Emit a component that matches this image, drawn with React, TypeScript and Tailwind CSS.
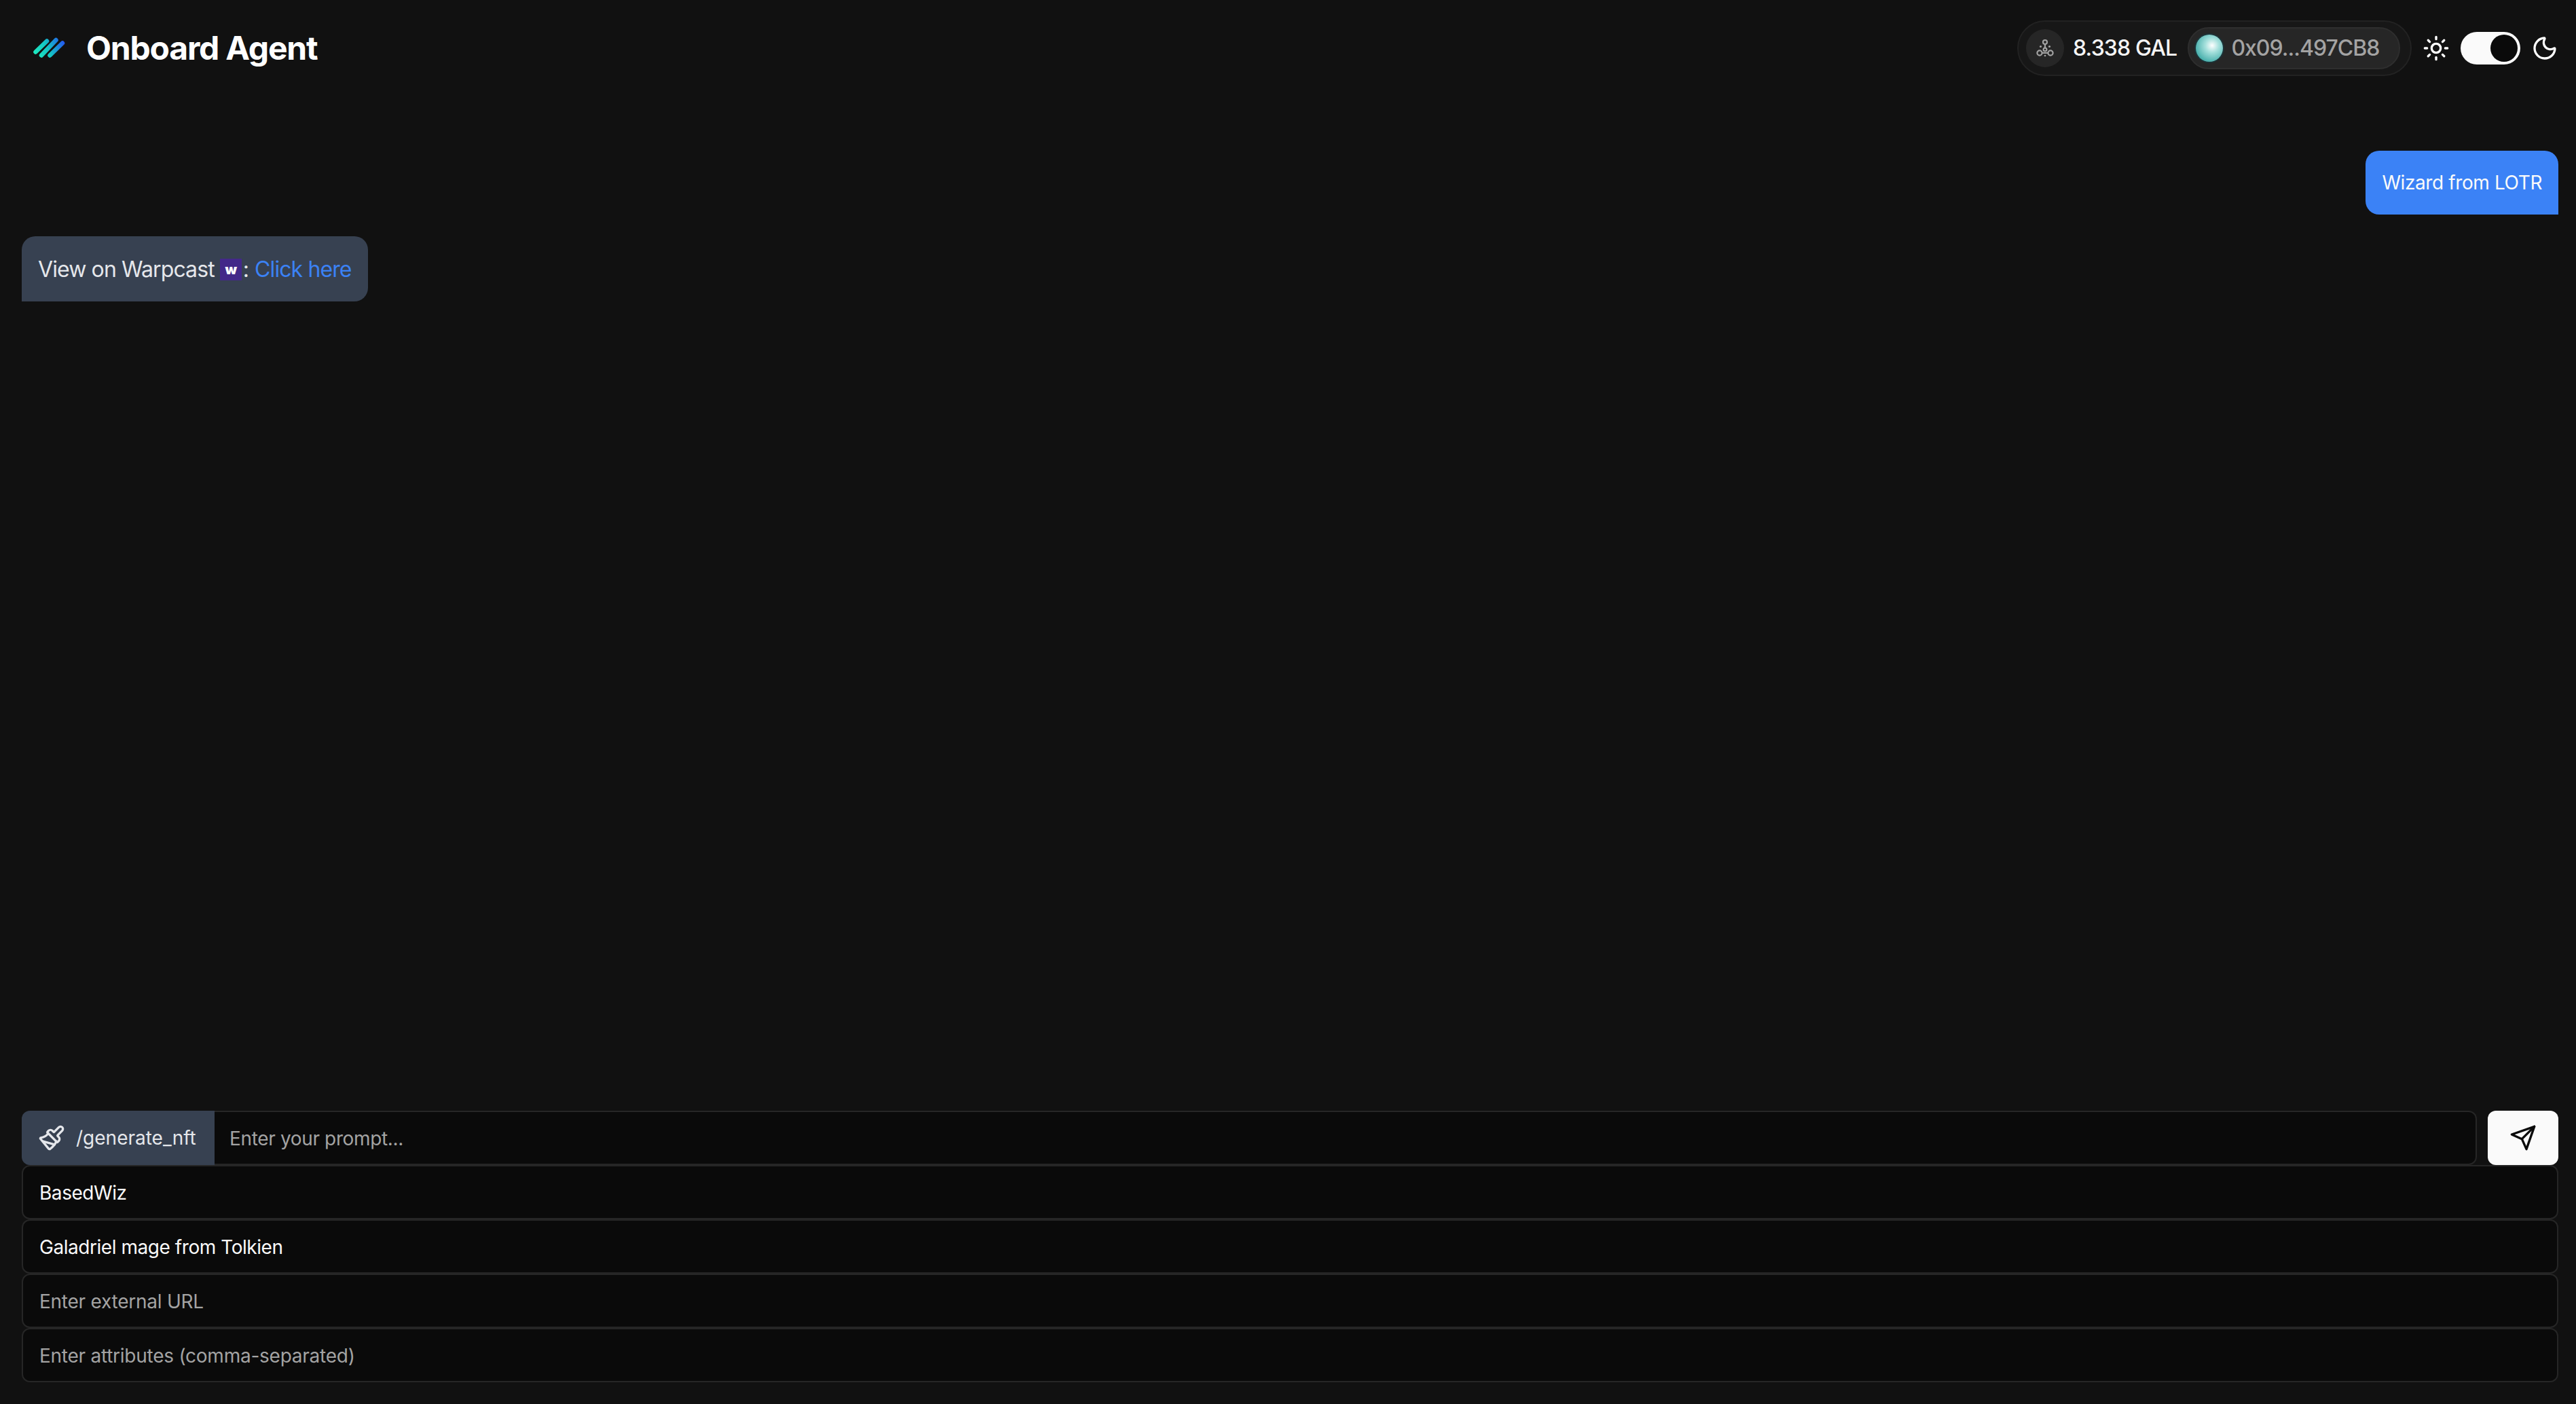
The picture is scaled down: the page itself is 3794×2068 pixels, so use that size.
import { Moon, Paintbrush, Sun } from "lucide-react";

const font = { fontFamily: "Inter, sans-serif" };

function Logo() {
  return (
    <svg width="50" height="40" viewBox="0 0 50 40">
      <defs>
        <linearGradient id="logo" gradientUnits="userSpaceOnUse" x1="4" y1="30" x2="46" y2="10">
          <stop offset="0" stopColor="#1de9bf" />
          <stop offset="0.45" stopColor="#14c4c4" />
          <stop offset="1" stopColor="#2458f0" />
        </linearGradient>
      </defs>
      <path d="M4.5 25.5 L21 9.5 M13 30.5 L34.5 8 M25.5 30.5 L44 12.5" stroke="url(#logo)" strokeWidth="6.5" strokeLinecap="round" fill="none" />
    </svg>
  );
}

function Network() {
  return (
    <svg width="30" height="30" viewBox="0 0 30 30" fill="none" stroke="#a3a3a3" strokeWidth="2.2">
      <circle cx="15" cy="6" r="3" />
      <circle cx="7" cy="22" r="3.6" />
      <circle cx="23" cy="22" r="3.6" />
      <circle cx="15" cy="17" r="2.4" />
      <path d="M10.6 22h8.8M15 9v5.5" />
      <circle cx="8.5" cy="12.5" r="1.6" fill="#a3a3a3" stroke="none" />
      <circle cx="21.5" cy="12.5" r="1.6" fill="#a3a3a3" stroke="none" />
      <circle cx="15" cy="26" r="1.3" fill="#a3a3a3" stroke="none" />
    </svg>
  );
}

function SendIcon() {
  return (
    <svg width="40" height="40" viewBox="0 0 24 24" fill="none" stroke="#0a0a0a" strokeWidth="2" strokeLinecap="round" strokeLinejoin="round">
      <path d="m22 2-7 20-4-9-9-4Z" />
      <path d="M22 2 11 13" />
    </svg>
  );
}

function Field({ value, placeholder }: { value?: string; placeholder: string }) {
  return (
    <input
      readOnly
      value={value}
      placeholder={placeholder}
      className="h-20 w-full rounded-xl border-2 border-[#262626] bg-[#0a0a0a] px-6 pt-[2px] text-[28px] tracking-[-0.45px] text-[#fafafa] outline-none placeholder:tracking-[-0.25px] placeholder:text-[#a3a3a3]"
    />
  );
}

export default function App() {
  return (
    <div className="flex h-screen flex-col bg-[#111111] text-white" style={font}>
      <header className="flex h-[142px] shrink-0 items-center justify-between pl-[48px] pr-[26px]">
        <div className="flex items-center gap-[29px]">
          <Logo />
          <h1 className="text-[48px] font-bold leading-none tracking-tight">Onboard Agent</h1>
        </div>
        <div className="flex items-center">
          <div className="flex h-[82px] w-[581px] items-center rounded-full border-2 border-[#222222] bg-[#171717] pl-[11px]">
            <div className="flex size-14 items-center justify-center rounded-full bg-[#262626]">
              <Network />
            </div>
            <span className="ml-[13px] text-[32px] font-medium tracking-[-0.85px] text-[#f5f5f5]">8.338 GAL</span>
            <div className="ml-4 flex h-[62px] w-[313px] items-center rounded-full border-2 border-[#2e2e2e] bg-[#262626] pl-[10px]">
              <div className="size-10 rounded-full bg-[radial-gradient(circle_at_60%_40%,#ffffff_0%,#a5e0dc_30%,#3aa8a5_80%)] ring-2 ring-[#1c3338]" />
              <span className="ml-3 text-[32px] font-medium tracking-[-1px] text-[#a3a3a3]">0x09...497CB8</span>
            </div>
          </div>
          <Sun className="ml-4 size-10 text-white" strokeWidth={2} />
          <div className="ml-4 flex h-12 w-[88px] items-center justify-end rounded-full bg-[#fafafa] pr-[4px]">
            <div className="size-10 rounded-full bg-[#0a0a0a]" />
          </div>
          <Moon className="ml-4 size-10 text-white" strokeWidth={2} />
        </div>
      </header>

      <main className="flex flex-1 flex-col gap-8 overflow-hidden pl-8 pr-[26px] pt-20">
        <div className="flex justify-end">
          <div className="rounded-[20px] rounded-br-none bg-[#3b82f6] px-6 py-[27px] text-[28px] leading-10 tracking-[-0.4px] text-[#fafafa]">
            Wizard from LOTR
          </div>
        </div>
        <div className="flex justify-start">
          <div className="flex items-center rounded-[20px] rounded-bl-none bg-[#374151] px-6 pb-[23px] pt-[25px] text-[32px] leading-[48px] tracking-[-0.9px] text-[#e5e7eb]">
            View on Warpcast
            <span className="ml-2 mr-[2px] flex size-8 items-center justify-center bg-[#432889] text-[20px] font-black leading-none text-white">w</span>
            <span className="mr-[9px]">:</span>
            <a className="text-[#3b82f6]">Click here</a>
          </div>
        </div>
      </main>

      <div className="shrink-0 pb-8 pl-8 pr-[26px]">
        <div className="flex gap-4">
          <div className="flex flex-1">
            <div className="flex h-20 w-[284px] shrink-0 items-center gap-4 rounded-l-xl bg-[#374151] pl-6 text-[28px] text-[#e5e7eb]">
              <Paintbrush className="size-10" strokeWidth={2} />
              /generate_nft
            </div>
            <input
              readOnly
              placeholder="Enter your prompt..."
              className="h-20 min-w-0 flex-1 rounded-r-xl border-2 border-l-0 border-[#262626] bg-[#0a0a0a] px-[22px] pt-[2px] text-[28px] outline-none placeholder:tracking-[-0.35px] placeholder:text-[#a3a3a3]"
            />
          </div>
          <button className="flex h-20 w-[104px] items-center justify-center rounded-xl bg-[#fafafa]">
            <SendIcon />
          </button>
        </div>
        <Field value="BasedWiz" placeholder="Enter collection name" />
        <Field value="Galadriel mage from Tolkien" placeholder="Enter description" />
        <Field placeholder="Enter external URL" />
        <Field placeholder="Enter attributes (comma-separated)" />
      </div>
    </div>
  );
}
